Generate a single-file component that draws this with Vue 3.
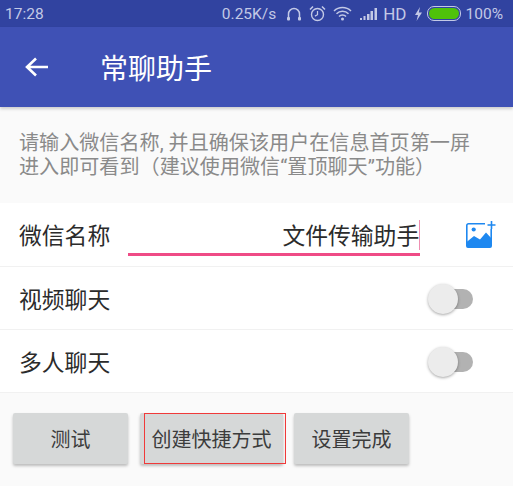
<template>
  <div class="screen">
    <!-- status bar -->
    <div class="status">
      <span class="time">17:28</span>
      <div class="status-right">
        <span class="speed">0.25K/s</span>
        <svg class="ic headset" width="16" height="16" viewBox="0 0 16 16">
          <path d="M2.500 13V8a5.500 5.500 0 0 1 11 0v5" fill="none" stroke="currentColor" stroke-width="1.500" />
          <rect x="1" y="11" width="3" height="3.500" rx="1" fill="currentColor" />
          <rect x="12" y="11" width="3" height="3.500" rx="1" fill="currentColor" />
        </svg>
        <svg class="ic alarm" width="17" height="17" viewBox="0 0 17 17">
          <circle cx="8.500" cy="9.500" r="6" fill="none" stroke="currentColor" stroke-width="1.400" />
          <path d="M8.500 6v3.700l-2.600 1.400" fill="none" stroke="currentColor" stroke-width="1.200" />
          <path d="M1 4.500 4 1.500M16 4.500l-3-3" stroke="currentColor" stroke-width="1.600" />
        </svg>
        <svg class="ic wifi" width="19" height="15" viewBox="0 0 19 15">
          <path d="M1 5a12 12 0 0 1 17 0M3.500 7.800a8.400 8.400 0 0 1 12 0M6 10.400a4.800 4.800 0 0 1 7 0" fill="none" stroke="currentColor" stroke-width="1.500" />
          <circle cx="9.500" cy="13" r="1.500" fill="currentColor" />
        </svg>
        <svg class="ic signal" width="18" height="13" viewBox="0 0 18 13">
          <path d="M0 11h2v2H0zM3.500 9h2v4h-2zM7 7h2.500v6H7zM10.500 4H13v9h-2.500zM14.500 1H17v12h-2.500z" fill="currentColor" />
        </svg>
        <span class="hd">HD</span>
        <svg class="ic bolt" width="9" height="14" viewBox="0 0 9 14">
          <path d="M6 0 1 8h3l-1.500 6L8 5.500H4.800z" fill="currentColor" />
        </svg>
        <div class="battery"><div class="battery-fill"></div></div>
        <span class="percent">100%</span>
      </div>
    </div>

    <!-- toolbar -->
    <header class="toolbar">
      <svg class="back" width="26" height="24" viewBox="0 0 26 24">
        <path d="M24 12H3M12 3.500 3 12l9 8.500" fill="none" stroke="#fff" stroke-width="2.600" />
      </svg>
      <h1>常聊助手</h1>
    </header>

    <p class="hint">请输入微信名称, 并且确保该用户在信息首页第一屏<br />进入即可看到（建议使用微信“置顶聊天”功能）</p>

    <section class="list">
      <div class="row name-row">
        <span class="label">微信名称</span>
        <div class="field"><span class="value">文件传输助手</span></div>
        <svg class="pic" width="30" height="27" viewBox="0 0 30 27">
          <path d="M19 2.800H2.500A1.700 1.700 0 0 0 .8 4.500v20.500M25.200 8v17" fill="none" stroke="#1e88f0" stroke-width="1.600" />
          <path d="M0 21.500 8 15l6 3.500L20 11.500l6 6.500v7a2 2 0 0 1-2 2H2a2 2 0 0 1-2-2z" fill="#1e88f0" />
          <circle cx="7.700" cy="8.500" r="2.100" fill="#1e88f0" />
          <path d="M25.500 0v8M21.500 4h8" stroke="#1e88f0" stroke-width="1.600" />
        </svg>
      </div>
      <div v-for="item in switches" :key="item" class="row">
        <span class="label">{{ item }}</span>
        <div class="switch"><div class="knob"></div></div>
      </div>
    </section>

    <div class="actions">
      <button class="test">测试</button>
      <div class="create-wrap">
        <button class="create">创建快捷方式</button>
        <div class="annotation"></div>
      </div>
      <button class="done">设置完成</button>
    </div>
  </div>
</template>

<script setup>
const switches = ['视频聊天', '多人聊天'];
</script>

<style>
html,
body {
  margin: 0;
  background: #fafafa;
}
</style>

<style scoped>
.screen {
  width: 513px;
  height: 486px;
  overflow: hidden;
  background: #fafafa;
  font-family: "Noto Sans CJK SC", "Liberation Sans", sans-serif;
}
.status {
  height: 27px;
  background: #3143a0;
  color: #c3c9e6;
  display: flex;
  align-items: center;
  justify-content: space-between;
  padding: 0 10px 0 5px;
  font-family: Roboto, sans-serif;
  font-size: 15.500px;
}
.status-right {
  display: flex;
  align-items: center;
}
.ic {
  flex: none;
}
.speed {
  margin-right: 10px;
}
.alarm {
  margin-left: 7px;
}
.wifi {
  margin-left: 7px;
}
.signal {
  margin-left: 8px;
}
.hd {
  margin-left: 5px;
  font-size: 17px;
}
.bolt {
  margin-left: 7px;
}
.battery {
  width: 32px;
  height: 13px;
  margin-left: 4px;
  border: 1px solid #c3c9e6;
  border-radius: 7px;
  display: flex;
}
.battery-fill {
  flex: 1;
  margin: 1px;
  background: #4fc20a;
  border-radius: 6px;
}
.percent {
  margin-left: 5px;
}
.toolbar {
  height: 80px;
  background: #3f51b5;
  display: flex;
  align-items: center;
  padding-left: 24px;
  box-shadow: 0 2px 3px rgba(0, 0, 0, 0.18);
  position: relative;
}
.toolbar h1 {
  margin: 0 0 0 50px;
  font-size: 28px;
  font-weight: 400;
  color: #fff;
}
.hint {
  margin: 0;
  height: 96px;
  box-sizing: border-box;
  padding: 24px 0 0 19px;
  font-family: Roboto, "Noto Sans CJK SC", sans-serif;
  font-size: 20.100px;
  line-height: 24px;
  color: #8a8a8a;
  white-space: nowrap;
}
.list {
  background: #fff;
}
.row {
  height: 62px;
  padding: 0 40px 0 19px;
  display: flex;
  align-items: center;
  justify-content: space-between;
  border-bottom: 1px solid #f1f1f1;
}
.name-row {
  height: 63px;
  padding-right: 17px;
}
.label {
  font-size: 22.800px;
  color: #2b2b2b;
}
.field {
  width: 292px;
  height: 53px;
  margin-left: 18px;
  align-self: flex-start;
  border-bottom: 3px solid #ef4b86;
  box-sizing: border-box;
  display: flex;
  align-items: center;
  justify-content: flex-end;
  padding-top: 14px;
}
.value {
  font-size: 22.800px;
  color: #2b2b2b;
  border-right: 1px solid #ef8fb2;
  line-height: 30px;
}
.pic {
  margin-left: auto;
}
.switch {
  width: 36px;
  height: 20px;
  margin-top: 1px;
  border-radius: 10px;
  background: #b2b2b2;
  position: relative;
}
.knob {
  position: absolute;
  left: -9px;
  top: -5px;
  width: 30px;
  height: 30px;
  border-radius: 50%;
  background: #ececec;
  box-shadow: 0 1px 3px rgba(0, 0, 0, 0.35);
}
.actions {
  display: flex;
  padding: 20px 0 0 13px;
}
button {
  height: 51px;
  padding: 0;
  border: none;
  border-radius: 2px;
  background: #d6d8d8;
  font-family: inherit;
  font-size: 20px;
  color: #3c3c3c;
  box-shadow: 0 2px 3px rgba(0, 0, 0, 0.25);
}
.test {
  width: 115px;
}
.create-wrap {
  position: relative;
  margin-left: 12px;
  height: 51px;
}
.create {
  display: block;
  width: 143px;
}
/* thin red annotation box sitting over the button */
.annotation {
  position: absolute;
  left: 4px;
  top: 0;
  width: 142px;
  height: 51px;
  box-sizing: border-box;
  border: 1px solid #f03a3a;
  pointer-events: none;
}
.done {
  width: 115px;
  margin-left: 11px;
}
</style>
